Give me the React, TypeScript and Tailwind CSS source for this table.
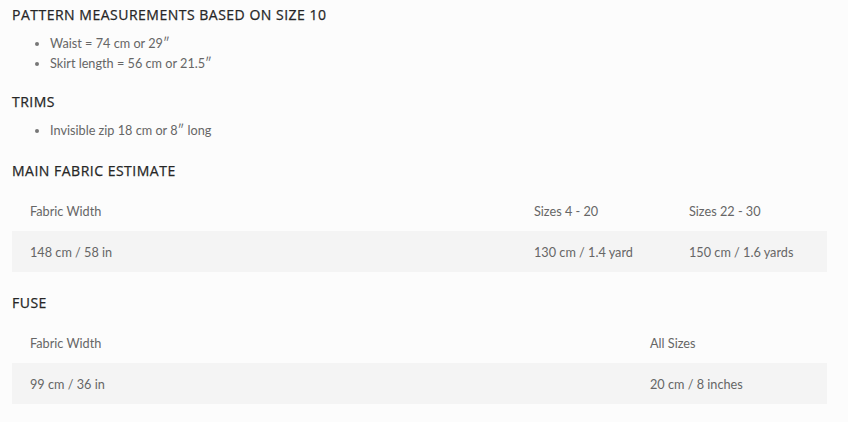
const headingClass =
  "text-[14px] leading-5 uppercase tracking-[0.5px] text-[#262626] font-normal [font-family:'Open_Sans',sans-serif] [-webkit-text-stroke:0.25px_#262626]";

const Heading = ({ children, className = "" }: { children: React.ReactNode; className?: string }) => (
  <h3 className={`${headingClass} ${className}`}>{children}</h3>
);

const Bullets = ({ items, className = "" }: { items: string[]; className?: string }) => (
  <ul className={`list-disc pl-[38px] marker:text-[#777] ${className}`}>
    {items.map((item) => (
      <li key={item} className="leading-5">
        {item}
      </li>
    ))}
  </ul>
);

const Table = ({ cols, header, row }: { cols: string[]; header: string[]; row: string[] }) => (
  <table className="w-[815px] border-collapse table-fixed">
    <colgroup>
      {cols.map((w, i) => (
        <col key={i} style={{ width: w }} />
      ))}
    </colgroup>
    <tbody>
      <tr className="h-[41px]">
        {header.map((h) => (
          <td key={h} className="px-[18px] pt-[2px] align-middle">
            {h}
          </td>
        ))}
      </tr>
      <tr className="h-[41px] bg-[#f4f4f4]">
        {row.map((c) => (
          <td key={c} className="px-[18px] pt-[2px] align-middle">
            {c}
          </td>
        ))}
      </tr>
    </tbody>
  </table>
);

export default function App() {
  return (
    <div className="min-h-[422px] bg-[#fcfcfc] pl-[12px] pt-[5px] text-[12.7px] text-[#666] [font-family:Lato,sans-serif]">
      <Heading>Pattern measurements based on size 10</Heading>
      <Bullets className="mt-[8px]" items={["Waist = 74 cm or 29\u02ba", "Skirt length = 56 cm or 21.5\u02ba"]} />

      <Heading className="mt-[19px]">Trims</Heading>
      <Bullets className="mt-[8px]" items={["Invisible zip 18 cm or 8\u02ba long"]} />

      <Heading className="mt-[21px]">Main fabric estimate</Heading>
      <div className="mt-[9px]">
        <Table
          cols={["504px", "155px", "156px"]}
          header={["Fabric Width", "Sizes 4 - 20", "Sizes 22 - 30"]}
          row={["148 cm / 58 in", "130 cm / 1.4 yard", "150 cm / 1.6 yards"]}
        />
      </div>

      <Heading className="mt-[21px]">Fuse</Heading>
      <div className="mt-[9px]">
        <Table
          cols={["620px", "195px"]}
          header={["Fabric Width", "All Sizes"]}
          row={["99 cm / 36 in", "20 cm / 8 inches"]}
        />
      </div>
    </div>
  );
}
